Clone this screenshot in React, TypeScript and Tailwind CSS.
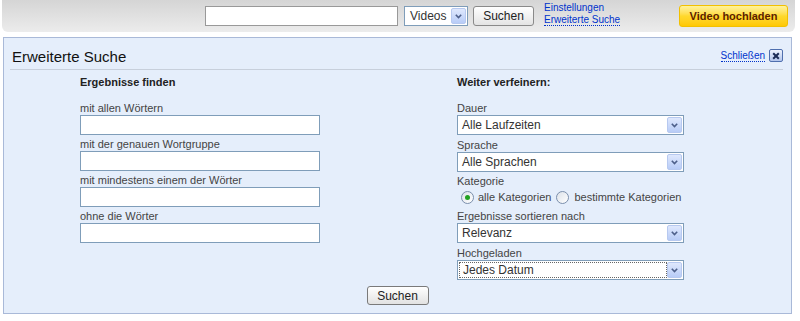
import React from "react";

function Arrow() {
  return (
    <span className="flex h-[16px] w-[15px] shrink-0 items-center justify-center rounded-[2px] border border-[#b7c9f0] bg-gradient-to-b from-[#dfe8fd] to-[#b8ccf7]">
      <svg width="7" height="5" viewBox="0 0 7 5">
        <path d="M0.8 0.8 L3.5 3.6 L6.2 0.8" fill="none" stroke="#4d5f8a" strokeWidth="1.6" />
      </svg>
    </span>
  );
}

function Select({ value, focus = false }: { value: string; focus?: boolean }) {
  return (
    <div className="flex h-[20px] w-[227px] items-center border border-[#7f9db9] bg-white p-[1px]">
      <span
        className={`flex h-full flex-1 items-center pl-[3px] text-[12px] text-[#333] ${
          focus ? "border border-dotted border-[#666]" : ""
        }`}
      >
        {value}
      </span>
      <Arrow />
    </div>
  );
}

function Field({ label }: { label: string }) {
  return (
    <div className="mb-[3px]">
      <div className="h-[13px] leading-[13px] text-[#444]">{label}</div>
      <div className="h-[20px] w-[240px] border border-[#7f9db9] bg-white" />
    </div>
  );
}

function Radio({ checked }: { checked?: boolean }) {
  return (
    <span className="flex h-[13px] w-[13px] items-center justify-center rounded-full border border-[#7b8fac] bg-gradient-to-br from-[#dde2e9] to-white">
      {checked && <span className="h-[5px] w-[5px] rounded-full bg-[#21a121]" />}
    </span>
  );
}

export default function App() {
  return (
    <div className="h-[321px] w-[800px] overflow-hidden bg-white font-['Liberation_Sans',Arial,sans-serif] text-[11px] text-[#444]">
      {/* Top bar */}
      <div className="ml-[2px] flex h-[32px] w-[793px] items-center rounded-b-[6px] bg-gradient-to-b from-[#d5d5d5] to-[#ececec]">
        <div className="ml-[203px] h-[20px] w-[193px] border border-[#999] bg-white" />
        <div className="ml-[6px] flex h-[20px] w-[64px] items-center border border-[#7f9db9] bg-white p-[1px]">
          <span className="flex-1 pl-[4px] text-[12px] text-[#333]">Videos</span>
          <Arrow />
        </div>
        <button className="ml-[5px] h-[20px] w-[61px] rounded-[3px] border border-[#8a8a8a] bg-gradient-to-b from-white to-[#e4e4e4] text-[12px] text-[#222]">
          Suchen
        </button>
        <div className="mb-[4px] ml-[10px] flex flex-col text-[10px] leading-[12px] text-[#0033cc]">
          <span>Einstellungen</span>
          <span className="border-b border-dotted border-[#0033cc] leading-[11px]">Erweiterte Suche</span>
        </div>
        <button className="ml-auto mr-[7px] h-[22px] w-[109px] rounded-[3px] border border-[#f2c000] bg-gradient-to-b from-[#fff39a] via-[#ffd92c] to-[#ffc800] text-[11px] font-bold text-[#5c1e00]">
          Video hochladen
        </button>
      </div>

      {/* Panel */}
      <div className="ml-[3px] mt-[5px] h-[277px] w-[789px] border border-[#a9b9d8] bg-[#e5eefb]">
        <div className="flex items-end pl-[8px] pr-[8px] pt-[10px]">
          <h1 className="text-[15px] leading-[18px] text-[#111]">Erweiterte Suche</h1>
          <div className="ml-auto flex items-center pb-[4px]">
            <span className="border-b border-dotted border-[#0033cc] text-[10px] leading-[11px] text-[#0033cc]">
              Schließen
            </span>
            <span className="ml-[4px] flex h-[13px] w-[14px] items-center justify-center rounded-[2px] border border-[#4f6fae] bg-gradient-to-b from-[#eef3fd] to-[#b3c5ec]">
              <svg width="8" height="8" viewBox="0 0 8 8">
                <path d="M1.2 1.2 L6.8 6.8 M6.8 1.2 L1.2 6.8" stroke="#1b2b55" strokeWidth="2" />
              </svg>
            </span>
          </div>
        </div>
        <div className="ml-[6px] mr-[8px] mt-[3px] h-[1px] bg-[#c7cfdb]" />

        <div className="mt-[6px] flex">
          <div className="ml-[76px] w-[240px]">
            <div className="mb-[13px] h-[13px] font-bold leading-[13px] text-[#222]">Ergebnisse finden</div>
            <Field label="mit allen Wörtern" />
            <Field label="mit der genauen Wortgruppe" />
            <Field label="mit mindestens einem der Wörter" />
            <Field label="ohne die Wörter" />
          </div>

          <div className="ml-[137px] w-[227px]">
            <div className="mb-[13px] h-[13px] font-bold leading-[13px] text-[#222]">Weiter verfeinern:</div>
            <div className="h-[13px] leading-[13px]">Dauer</div>
            <Select value="Alle Laufzeiten" />
            <div className="mt-[3px] h-[14px] leading-[14px]">Sprache</div>
            <Select value="Alle Sprachen" />
            <div className="mt-[3px] h-[13px] leading-[13px]">Kategorie</div>
            <div className="flex h-[19px] items-center pl-[4px]">
              <Radio checked />
              <span className="ml-[4px]">alle Kategorien</span>
              <span className="ml-[5px]" />
              <Radio />
              <span className="ml-[5px]">bestimmte Kategorien</span>
            </div>
            <div className="mt-[3px] h-[13px] leading-[13px]">Ergebnisse sortieren nach</div>
            <Select value="Relevanz" />
            <div className="mt-[4px] h-[13px] leading-[13px]">Hochgeladen</div>
            <Select value="Jedes Datum" focus />
          </div>
        </div>

        <div className="mt-[6px] flex justify-center">
          <button className="h-[19px] w-[62px] rounded-[3px] border border-[#7a7a7a] bg-gradient-to-b from-white to-[#e2e2e2] text-[12px] text-[#222]">
            Suchen
          </button>
        </div>
      </div>
    </div>
  );
}
